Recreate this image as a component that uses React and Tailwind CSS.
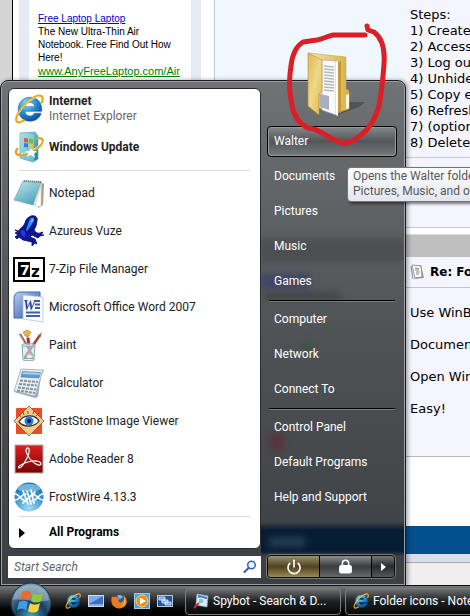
import React from 'react';
import { Lock, Power } from 'lucide-react';

const InternetExplorerIcon = ({ id, className }) => (
  <svg viewBox="0 0 32 32" className={className} aria-hidden="true">
    <defs>
      <radialGradient id={id} cx="0.35" cy="0.25" r="0.85">
        <stop offset="0" stopColor="#8fe0fa" />
        <stop offset="0.45" stopColor="#2a94dc" />
        <stop offset="1" stopColor="#0a3f8c" />
      </radialGradient>
    </defs>
    <path
      d="M17 3.5C9 3.5 4.5 9.5 4.5 16.5C4.5 24 10 29 17 29C23 29 27.5 25.5 29 20.5H21.5C20.5 22.5 19 23.5 17 23.5C14 23.5 12 21.5 11.8 18.5H29.6C30.4 9.5 25 3.5 17 3.5ZM12 13.5C12.5 10.5 14.5 9 17 9C20 9 21.8 10.8 22.2 13.5Z"
      fill={`url(#${id})`}
      stroke="#1763ab"
      strokeWidth="0.6"
    />
    <path
      d="M29.500 9C31.5 4.5 31 1.5 27 1.8C20 2.5 9 12 4.5 20.5C1.5 26.5 1.5 30.5 5.5 30.3C7.5 30.2 9 29.3 10.5 28.2"
      fill="none"
      stroke="#e9a91c"
      strokeWidth="2.4"
      strokeLinecap="round"
    />
    <path d="M27 2.5C20 3.5 9.5 12.5 5 21" fill="none" stroke="#ffe694" strokeWidth="0.9" />
  </svg>
);

const WindowsUpdateIcon = () => (
  <svg viewBox="0 0 32 32" className="size-8" aria-hidden="true">
    <defs>
      <linearGradient id="updateBox" x1="0" y1="0" x2="1" y2="1">
        <stop offset="0" stopColor="#c6eaf0" />
        <stop offset="0.5" stopColor="#58b3c4" />
        <stop offset="1" stopColor="#1d7f94" />
      </linearGradient>
    </defs>
    <path d="M7 2L22 1L25 5V28L20 31L7 27Z" fill="url(#updateBox)" stroke="#5a9dab" strokeWidth="0.7" />
    <path d="M7 2L21 4V31L7 27Z" fill="#9fd8e2" opacity="0.6" />
    <path d="M11 7L15 7.5V11.5L11 11Z" fill="#e4582b" />
    <path d="M16 7.7L20 8.3V12.2L16 11.7Z" fill="#7db832" />
    <path d="M11 12L15 12.5V16.5L11 16Z" fill="#3a7fd0" />
    <path d="M16 12.7L20 13.2V17L16 16.6Z" fill="#f3c52c" />
    <path d="M23 8C28 6 31 8 29 12C26 18 14 24 7 24C2 24 2 20 5 17" fill="none" stroke="#e5a22c" strokeWidth="2.4" />
    <path d="M29 10C27 16 15 22 8 23" fill="none" stroke="#fff0b8" strokeWidth="0.9" />
    <path d="M18 17L20 20L24 20L21 23L22 27L18 24L14 26L15 22L12 20H16Z" fill="#f4fdff" />
  </svg>
);

const NotepadIcon = () => (
  <svg viewBox="0 0 32 32" className="size-8" aria-hidden="true">
    <defs>
      <linearGradient id="notepadCover" x1="0" y1="0" x2="0.6" y2="1">
        <stop offset="0" stopColor="#c5e6ee" />
        <stop offset="1" stopColor="#4ca6b8" />
      </linearGradient>
    </defs>
    <path d="M26 4L31 7L30 28L25 31Z" fill="#a99c82" />
    <path d="M10 5L29 6L28 29L20 27Z" fill="#f1f1e9" stroke="#aaa99e" strokeWidth="0.6" />
    <path d="M28 8L22 29L28 30Z" fill="#fff" stroke="#b5b5ab" strokeWidth="0.5" />
    <path d="M10 4L28 5L20 28L1 23Z" fill="url(#notepadCover)" stroke="#75aab5" strokeWidth="0.7" />
    <path d="M11 4L28 5" stroke="#777" strokeWidth="2" strokeDasharray="1 1" />
  </svg>
);

const FrogIcon = () => (
  <svg viewBox="0 0 32 32" className="size-8" aria-hidden="true">
    <path
      d="M18 1C22 0 25 2 24 6L23 11L21 15C22 17 25 19 27 18L30 17L28 20L31 20L27 21L25 23L19 20L17 22L22 24L24 29L22 28L19 31L19 27L10 25L6 22L4 24L2 22L5 20L2 18L5 17L2 15L6 16L7 14C10 12 12 9 13 5C14 3 16 2 18 1Z"
      fill="#10149b"
      stroke="#080a50"
      strokeWidth="0.8"
    />
    <path d="M18 3C20 2 22 3 21 6C19 9 17 12 14 16L13 15C15 11 15 6 18 3Z" fill="#2b94e9" />
    <path d="M9 15C12 15 13 18 12 22C10 22 7 19 8 16Z" fill="#2b38dc" />
    <path d="M19 4L20 5L18 8Z" fill="#b3f1ff" />
    <circle cx="22" cy="5" r="1" fill="#020326" />
  </svg>
);

const SevenZipIcon = () => (
  <svg viewBox="0 0 32 32" className="size-8" aria-hidden="true">
    <rect x="1" y="5" width="30" height="23" fill="#fff" stroke="#000" strokeWidth="2" />
    <rect x="5" y="9" width="12" height="15" />
    <text x="7" y="22" fontSize="14" className="fill-white font-['DejaVu_Sans'] font-bold">7</text>
    <text x="18" y="24" fontSize="15" className="fill-black font-['DejaVu_Sans'] font-bold">z</text>
  </svg>
);

const WordIcon = () => (
  <svg viewBox="0 0 32 32" className="size-8" aria-hidden="true">
    <defs>
      <linearGradient id="wordTile" x1="0" y1="0" x2="1" y2="1">
        <stop offset="0" stopColor="#b9d0f1" />
        <stop offset="1" stopColor="#2950a2" />
      </linearGradient>
    </defs>
    <path d="M7 1H27V27H1V8C1 4 3 1 7 1Z" fill="url(#wordTile)" stroke="#4265a9" />
    <path d="M10 4L30 6L30 31L10 28Z" fill="#f8fbff" stroke="#a8bddd" strokeWidth="0.7" />
    <path d="M22 10H27M22 13.500H27M22 17H27M13 21.500H27M13 25H27" stroke="#3a5fae" strokeWidth="1.8" />
    <text x="10" y="19" fontSize="14" className="fill-[#24489c] font-['Liberation_Serif'] font-bold italic">W</text>
  </svg>
);

const PaintIcon = () => (
  <svg viewBox="0 0 32 32" className="size-8" aria-hidden="true">
    <path d="M14 4L17 26" stroke="#c79548" strokeWidth="2" />
    <path d="M10 3L14 1L18 3L16 7H12Z" fill="#e9b34b" stroke="#a2732c" strokeWidth="0.5" />
    <path d="M7 5L20 27" stroke="#7c6050" strokeWidth="2.2" />
    <path d="M7 6L13 17" stroke="#d1bca3" strokeWidth="1" />
    <path d="M15 9L16 19" stroke="#c72026" strokeWidth="3" />
    <path d="M27 6L12 28" stroke="#a63d3a" strokeWidth="2.5" />
    <path d="M29 3L25 7L27 9Z" fill="#9b662f" />
    <path d="M9 16H22L21 31C18 32 12 32 10 31Z" fill="#cfe6ec" fillOpacity="0.6" stroke="#7d9da7" strokeWidth="0.9" />
    <ellipse cx="15.5" cy="16" rx="6.5" ry="1.8" fill="#ecf8fa" fillOpacity="0.5" stroke="#81a5af" strokeWidth="0.7" />
    <path d="M11 27C14 30 18 30 21 27L20 30H11Z" fill="#74ad92" />
  </svg>
);

const CalculatorIcon = () => (
  <svg viewBox="0 0 32 32" className="size-8" aria-hidden="true">
    <path d="M8 2L31 3L28 9L25 30L22 31L1 25Z" fill="#9eabb5" />
    <path d="M8 2L30 3L22 29L1 24Z" fill="#e8edf2" stroke="#98a7b3" strokeWidth="0.7" />
    <path d="M9.5 4.5L27.5 5.5L26 11L8 10Z" fill="#5f9ccd" stroke="#446e93" strokeWidth="0.5" />
    <path d="M10 5L27 6L26.5 8L9.5 7Z" fill="#a9d1ed" />
    <path d="M7 13.5L25 15M6 17L24 18.5M5 20.5L23 22.5M4 23.5L22 26" stroke="#8293a1" strokeWidth="2" strokeDasharray="3 1" />
  </svg>
);

const FastStoneIcon = () => (
  <svg viewBox="0 0 32 32" className="size-8" aria-hidden="true">
    <rect x="3" y="3" width="26" height="26" rx="1" fill="#f34a25" />
    <path d="M16 1L31 16L16 31L1 16Z" fill="#f4c98b" stroke="#765639" strokeWidth="0.8" />
    <path d="M6 17C10 9 22 9 26 16C22 22 11 23 6 17Z" fill="#fff" stroke="#392a20" strokeWidth="1.3" />
    <circle cx="16" cy="16" r="4.5" fill="#217fe2" />
    <circle cx="16" cy="16" r="2" fill="#001243" />
    <path d="M8 12L6 9M11 10L10 7M15 9V6M20 9L21 6M23 11L26 8" stroke="#67472b" strokeWidth="0.9" />
  </svg>
);

const AdobeReaderIcon = () => (
  <svg viewBox="0 0 32 32" className="size-8" aria-hidden="true">
    <defs>
      <linearGradient id="readerTile" x1="0" y1="0" x2="0" y2="1">
        <stop offset="0" stopColor="#df2020" />
        <stop offset="1" stopColor="#740505" />
      </linearGradient>
    </defs>
    <rect x="2" y="2" width="28" height="28" fill="url(#readerTile)" stroke="#c8a5a5" />
    <path
      d="M14 5C17 4 17 9 14 15C11 21 8 25 6 25C4 24 8 21 15 19C21 17 28 18 28 21C27 24 20 20 17 16C14 12 12 7 14 5Z"
      fill="none"
      stroke="#fff"
      strokeWidth="1.2"
    />
  </svg>
);

const FrostWireIcon = () => (
  <svg viewBox="0 0 32 32" className="size-8" aria-hidden="true">
    <defs>
      <radialGradient id="frostBall" cx="0.5" cy="0.9" r="0.9">
        <stop offset="0" stopColor="#a2dcf7" />
        <stop offset="0.6" stopColor="#3b93cf" />
        <stop offset="1" stopColor="#1b68ae" />
      </radialGradient>
    </defs>
    <circle cx="16" cy="16" r="14.5" fill="url(#frostBall)" />
    <path d="M4 8C9 1 23 1 28 8C22 12 10 12 4 8Z" fill="#a6daf2" opacity="0.6" />
    <path
      d="M2 13C7 13 8 20 13 20M2 19C7 19 8 13 13 13M30 13C25 13 24 20 19 20M30 19C25 19 24 13 19 13M10 10L15 23M14 10L18 23M18 9L21 22M10 22L22 11"
      fill="none"
      stroke="#fff"
      strokeWidth="1.7"
      strokeLinecap="round"
    />
  </svg>
);

const FolderIcon = ({ className }) => (
  <svg viewBox="0 0 62 66" className={className} aria-hidden="true">
    <defs>
      <linearGradient id="folderFront" x1="0" y1="0" x2="1" y2="1">
        <stop offset="0" stopColor="#dcb955" />
        <stop offset="0.5" stopColor="#f0d888" />
        <stop offset="1" stopColor="#dcb450" />
      </linearGradient>
      <linearGradient id="folderBack" x1="0" y1="0" x2="1" y2="0">
        <stop offset="0" stopColor="#f6e7a7" />
        <stop offset="1" stopColor="#d6b04c" />
      </linearGradient>
    </defs>
    <path d="M44 50L60 50L54 55L32 63Z" fill="#33373a" opacity="0.5" />
    <path d="M3 1L41 5V37L44 39V57L31 61L14 56V8Z" fill="url(#folderBack)" stroke="#caa64a" strokeWidth="0.6" />
    <path d="M41 43L44 42V56L41 57Z" fill="#fff8d5" />
    <path d="M17 8L31 9V63L17 58Z" fill="#fafafa" stroke="#aaa" strokeWidth="0.6" />
    <path d="M19 14L29 15M19 17L29 18M19 20L29 21M19 23L29 24M19 26L29 27M19 29L29 30M19 32L29 33M19 35L29 36M19 38L29 39" stroke="#b4b9be" strokeWidth="1.5" />
    <path d="M15 42L24 44V58L15 55Z" fill="#a8aebb" />
    <path d="M31 9L33 10V64L31 63Z" fill="#fff" />
    <path d="M33 10L36 9V61L33 60Z" fill="#c59a36" />
    <path d="M3 1L17 8V39L14 42V63L3 54Z" fill="url(#folderFront)" stroke="#b98f36" strokeWidth="0.6" />
  </svg>
);

const WindowsOrb = () => (
  <svg viewBox="0 0 42 42" className="size-[42px]" aria-hidden="true">
    <defs>
      <radialGradient id="orbGlass" cx="0.5" cy="0.85" r="0.85">
        <stop offset="0" stopColor="#3ea9c5" />
        <stop offset="0.45" stopColor="#153d60" />
        <stop offset="1" stopColor="#7ba0b4" />
      </radialGradient>
    </defs>
    <circle cx="21" cy="21" r="20" fill="url(#orbGlass)" stroke="#1d3443" />
    <path d="M3 18C4 8 12 3 21 3C30 3 38 8 39 18C29 22 14 16 3 18Z" fill="#d4e4eb" opacity="0.4" />
    <path d="M12 10C15 8 18 8 21 10L19 18C16 16 13 16 10 18Z" fill="#ee6a2c" />
    <path d="M23 11C26 13 30 13 33 11L31 19C28 21 24 21 21 19Z" fill="#91c83e" />
    <path d="M9 20C12 18 15 18 18 20L16 28C13 26 10 26 7 28Z" fill="#3c9ee6" />
    <path d="M20 21C23 23 27 23 30 21L28 29C25 31 21 31 18 29Z" fill="#fbd13d" />
  </svg>
);

const ShowDesktopIcon = () => (
  <svg viewBox="0 0 16 16" className="size-4" aria-hidden="true">
    <rect x="0.5" y="2.5" width="15" height="11" fill="#3a6fc4" stroke="#d3dcea" />
    <path d="M1 3H15L1 11Z" fill="#7facea" />
    <path d="M1 12H15" stroke="#dbe7f5" />
  </svg>
);

const FirefoxIcon = () => (
  <svg viewBox="0 0 16 16" className="size-4" aria-hidden="true">
    <circle cx="8.5" cy="7.5" r="6" fill="#2c57a5" />
    <path d="M6 3C8 1 11 2 12 4L9 6Z" fill="#7eb9e8" />
    <path d="M1 2C1 4 2 4 3 4C5 3 7 5 9 6C7 7 7 8 8 9C10 10 12 9 13 7C13 5 13 3 12 2C17 5 17 12 12 14.5C7 17 1 14 0.5 9C0 6 1 4 1 2Z" fill="#ea7b1c" />
    <path d="M13 4C16 8 14 13 9 14C13 12 14 9 13 4Z" fill="#ffd24e" />
  </svg>
);

const MediaPlayerIcon = () => (
  <svg viewBox="0 0 16 16" className="size-4" aria-hidden="true">
    <rect x="0.5" y="0.5" width="15" height="15" fill="#4b9fd7" stroke="#98d1ee" />
    <circle cx="8" cy="8" r="6" fill="#f08b1d" stroke="#ffd17d" />
    <path d="M6 4.5L12 8L6 11.5Z" fill="#fff" />
  </svg>
);

const SwitchWindowsIcon = () => (
  <svg viewBox="0 0 16 16" className="size-4" aria-hidden="true">
    <rect x="0.5" y="2.5" width="15" height="11" fill="#23539b" stroke="#b9c8dc" />
    <path d="M2 4H8V7H2ZM5 7H11V10H5ZM8 9H14V12H8Z" fill="#7ea7dc" stroke="#e8f2fd" strokeWidth="0.8" />
  </svg>
);

const SpybotIcon = () => (
  <svg viewBox="0 0 16 16" className="size-4 shrink-0" aria-hidden="true">
    <path d="M4 1L15 3L14 14L3 12Z" fill="#d8e8f5" stroke="#8eb0cd" strokeWidth="0.7" />
    <path d="M5 2L14 4L13.8 6L5 4.5Z" fill="#4379c5" />
    <circle cx="8" cy="8" r="3" fill="#8abbe0" stroke="#eef6fc" />
    <path d="M6 10L1 15" stroke="#c53031" strokeWidth="2" />
  </svg>
);

const PostIcon = () => (
  <svg viewBox="0 0 16 16" className="size-4 shrink-0" aria-hidden="true">
    <path d="M3 2L11 1L14 14L5 15Z" fill="#999" />
    <path d="M2 1L11 2L12 13L5 14Z" fill="#fff" stroke="#777" strokeWidth="0.7" />
    <path d="M5 4L9 4.5M5 6H9M6 8H10M6 10H9M1 2L3 15" stroke="#777" strokeWidth="0.9" />
  </svg>
);

const programs = [
  { name: 'Notepad', Icon: NotepadIcon },
  { name: 'Azureus Vuze', Icon: FrogIcon },
  { name: '7-Zip File Manager', Icon: SevenZipIcon },
  { name: 'Microsoft Office Word 2007', Icon: WordIcon },
  { name: 'Paint', Icon: PaintIcon },
  { name: 'Calculator', Icon: CalculatorIcon },
  { name: 'FastStone Image Viewer', Icon: FastStoneIcon },
  { name: 'Adobe Reader 8', Icon: AdobeReaderIcon },
  { name: 'FrostWire 4.13.3', Icon: FrostWireIcon },
];

const places = [
  ['Documents', 'Pictures', 'Music', 'Games'],
  ['Computer', 'Network', 'Connect To'],
  ['Control Panel', 'Default Programs', 'Help and Support'],
];

const steps = ['Create', 'Access', 'Log out', 'Unhide', 'Copy e', 'Refresh', '(option', 'Delete'];

const ForumPage = () => (
  <div className="flex min-h-0 flex-1 overflow-hidden bg-white">
    <div className="w-3 shrink-0 bg-[#d4d4d4]" />
    <div className="w-px shrink-0 bg-black" />

    {/* Ad column */}
    <div className="ml-[6px] w-[182px] shrink-0 border-x-[10px] border-[#e4ebf3] pl-[9px] pt-3 font-['Liberation_Sans',Arial,sans-serif] text-[10px] leading-[13px] text-black">
      <a href="#ad" className="block text-[#0000cc] underline">Free Laptop Laptop</a>
      <p className="whitespace-nowrap">
        The New Ultra-Thin Air<br />Notebook. Free Find Out How<br />Here!
      </p>
      <a href="#ad" className="block whitespace-nowrap text-[11px] leading-[14px] text-[#008000] underline">www.AnyFreeLaptop.com/Air</a>
    </div>

    <div className="ml-[13px] w-[188px] shrink-0 border-l border-[#c4c9ce] bg-[#f0f8ff]" />

    {/* Thread column */}
    <div className="flex min-w-0 flex-1 flex-col overflow-hidden whitespace-nowrap font-['DejaVu_Sans',Verdana,sans-serif] text-[13px] leading-4 text-black">
      <div className="h-[158px] shrink-0 border-b border-[#c6c6d0] bg-[#f5f5ff] pl-2 pt-[7px]">
        <p>Steps:</p>
        <ol>
          {steps.map((step, idx) => (
            <li key={step}>{idx + 1}) {step}</li>
          ))}
        </ol>
      </div>
      <div className="h-[70px] shrink-0 border-b border-[#c6c6c6] bg-[#f5f5ff]" />
      <div className="mt-1.5 h-[23px] shrink-0 border-t border-[#ddd] bg-[#bfbfbf]" />
      <div className="flex h-[31px] shrink-0 items-center gap-1 border-b border-[#c6c6d0] bg-[#f5f5ff] pl-2">
        <PostIcon />
        <h2 className="text-xs font-bold">Re: Folder icons</h2>
      </div>
      <div className="flex shrink-0 flex-col gap-4 border-b border-[#b9b9b9] bg-[#f5f5ff] pb-[39px] pl-2 pt-[17px]">
        <p>Use WinBubbles</p>
        <p>Documents</p>
        <p>Open WinBubbles</p>
        <p>Easy!</p>
      </div>
      <div className="mt-[69px] h-7 shrink-0 bg-[#04508f]" />
      <div className="h-2 shrink-0 bg-[#dcdcea]" />
      <div className="flex-1 border-t border-[#aaa] bg-[#f0eeee]" />
    </div>
  </div>
);

// Page shapes that shine through the glass of the menu
const GlassShapes = () => (
  <div className="pointer-events-none absolute inset-y-0 right-0 w-[144px] overflow-hidden" aria-hidden="true">
    <div className="absolute left-0 top-[156px] h-6 w-full bg-black/15 blur-[3px]" />
    <div className="absolute left-0 top-[192px] h-3.5 w-[50px] bg-[#2c3070]/50 blur-[3px]" />
    <div className="absolute left-1 top-[210px] h-2 w-[76px] bg-black/20 blur-[3px]" />
    <div className="absolute left-[43px] top-[260px] size-2 rounded-full bg-[#125c2a]/60 blur-[3px]" />
    <div className="absolute left-[10px] top-[352px] h-4 w-3.5 bg-[#6a1f2c]/50 blur-[3px]" />
    <div className="absolute left-[9px] top-[455px] h-2.5 w-9 bg-[#31485e]/70 blur-[3px]" />
  </div>
);

const ProgramButton = ({ children, icon }) => (
  <button type="button" className="flex h-[38px] w-full items-center gap-1 pl-1 text-left text-[#222]">
    <span className="flex w-8 shrink-0 justify-center">{icon}</span>
    <span>{children}</span>
  </button>
);

const StartMenu = () => (
  <div className="absolute bottom-[30px] left-0 flex w-[406px] rounded-t-lg border border-[#1c1c1c] bg-linear-to-b from-[#707375] via-[#505356] to-[#3b3e42] font-[Roboto,'Open_Sans',sans-serif] text-xs leading-[15px] shadow-[inset_0_0_0_1px_#9b9da0,2px_0_4px_rgba(0,0,0,0.35)]">
    {/* Programs */}
    <div className="flex flex-1 flex-col gap-[7px] pb-[7px] pl-[7px] pt-[7px]">
      <nav className="rounded-md border border-[#2b2b2b] bg-white pt-px" aria-label="Programs">
        <ProgramButton icon={<InternetExplorerIcon id="ieMenu" className="size-[30px]" />}>
          <span className="block font-bold">Internet</span>
          <span className="block text-[#666]">Internet Explorer</span>
        </ProgramButton>
        <ProgramButton icon={<WindowsUpdateIcon />}>
          <span className="font-bold">Windows Update</span>
        </ProgramButton>
        <hr className="mx-2.5 mb-[3px] mt-1 border-[#d6dde2]" />
        {programs.map(({ name, Icon }) => (
          <ProgramButton key={name} icon={<Icon />}>{name}</ProgramButton>
        ))}
        <hr className="mx-2.5 border-[#d6dde2]" />
        <button type="button" className="flex h-[31px] w-full items-center gap-6 pl-2.5 text-left font-bold text-black">
          <svg viewBox="0 0 6 10" className="h-2.5 w-1.5" aria-hidden="true">
            <path d="M0 0L6 5L0 10Z" />
          </svg>
          All Programs
        </button>
      </nav>
      <label className="flex h-[22px] items-center bg-white pl-1.5 pr-1">
        <input
          type="text"
          placeholder="Start Search"
          aria-label="Start Search"
          className="min-w-0 flex-1 bg-transparent italic outline-none placeholder:text-[#666]"
        />
        <svg viewBox="0 0 14 14" className="size-3.5" aria-hidden="true">
          <circle cx="8.5" cy="5" r="3.8" fill="#e9f4ff" stroke="#3466b0" strokeWidth="1.5" />
          <path d="M5.500 8L1.5 12" stroke="#3466b0" strokeWidth="2.2" strokeLinecap="round" />
        </svg>
      </label>
    </div>

    {/* Places */}
    <div className="relative m-px ml-0 flex w-[143px] shrink-0 flex-col bg-[linear-gradient(to_top,transparent_28px,#071d33_33px,#071d33_54px,transparent_62px)] pb-[6px] pl-[6px] pr-[7px] pt-[42px] text-white">
      <GlassShapes />
      <button type="button" className="relative my-0.5 h-[31px] rounded-sm border border-black bg-linear-to-b from-[#85888a] via-[#54575a] to-[#77797c] px-1.5 text-left shadow-[inset_0_0_0_1px_#96989a]">
        Walter
      </button>
      {places.map((group, idx) => (
        <div key={group[0]} className="relative">
          {idx > 0 && <hr className="mx-0.5 mt-px border-b border-t-black border-b-[#777b7e]" />}
          {group.map((place) => (
            <button key={place} type="button" className="block h-[35px] w-full px-[7px] text-left">{place}</button>
          ))}
        </div>
      ))}
      <div className="relative mt-auto flex h-[23px] w-[128px] overflow-hidden rounded-sm border border-[#0b0b0b] shadow-[0_0_0_1px_#777]">
        <button type="button" aria-label="Power" className="flex flex-1 items-center justify-center border-r border-black bg-linear-to-b from-[#9d9070] via-[#50431f] to-[#9c8955]">
          <Power size={16} strokeWidth={2.5} />
        </button>
        <button type="button" aria-label="Lock" className="flex flex-1 items-center justify-center border-r border-black bg-linear-to-b from-[#8c8e90] via-[#3a3c3f] to-[#66696c]">
          <Lock size={15} strokeWidth={2.5} className="[&_rect]:fill-white" />
        </button>
        <button type="button" aria-label="More" className="flex w-[22px] items-center justify-center bg-linear-to-b from-[#76787a] via-[#292b2e] to-[#55585b]">
          <svg viewBox="0 0 5 8" className="h-2 w-[5px]" aria-hidden="true">
            <path d="M0 0L5 4L0 8Z" fill="#fff" />
          </svg>
        </button>
      </div>
    </div>

    <FolderIcon className="absolute left-[304px] top-[-29px] h-[66px] w-[62px]" />
    <div role="tooltip" className="absolute left-[346px] top-[86px] h-[35px] whitespace-nowrap rounded-sm border border-[#767676] bg-linear-to-b from-white to-[#e4e5f0] px-[5px] pt-px text-[#575757] shadow-[2px_2px_3px_rgba(0,0,0,0.5)]">
      Opens the Walter folder, Documents,<br />Pictures, Music, and other files
    </div>
  </div>
);

const Taskbar = () => (
  <div className="relative flex h-[31px] shrink-0 items-center border-t border-[#111] bg-linear-to-b from-[#77797b] via-[#242628] via-50% to-black pl-[10px] font-[Roboto,'Open_Sans',sans-serif] text-xs text-white">
    <button type="button" aria-label="Start" className="z-10 -mb-1 shrink-0">
      <WindowsOrb />
    </button>
    <div className="ml-[13px] flex shrink-0 items-center gap-[7px]">
      <button type="button" aria-label="Internet Explorer"><InternetExplorerIcon id="ieQuick" className="size-4" /></button>
      <button type="button" aria-label="Show desktop"><ShowDesktopIcon /></button>
      <button type="button" aria-label="Firefox"><FirefoxIcon /></button>
      <button type="button" aria-label="Media Player"><MediaPlayerIcon /></button>
      <button type="button" aria-label="Switch windows"><SwitchWindowsIcon /></button>
    </div>
    <div className="ml-3 flex min-w-0 flex-1 gap-1 overflow-hidden">
      <button type="button" className="flex h-[27px] w-[156px] shrink-0 items-center gap-1 rounded-sm border border-[#7b7d7f] bg-linear-to-b from-[#717375] via-[#1d1f21] via-50% to-[#090909] px-[7px]">
        <SpybotIcon />
        <span className="truncate">Spybot - Search &amp; D...</span>
      </button>
      <button type="button" className="flex h-[27px] w-[156px] shrink-0 items-center gap-1 rounded-sm border border-[#7b7d7f] bg-linear-to-b from-[#717375] via-[#1d1f21] via-50% to-[#090909] px-[7px]">
        <InternetExplorerIcon id="ieTask" className="size-4 shrink-0" />
        <span className="whitespace-nowrap">Folder icons - Notepad</span>
      </button>
    </div>
  </div>
);

// Freehand pen stroke around the folder
const PenCircle = () => (
  <svg viewBox="0 0 100 124" className="pointer-events-none absolute left-[287px] top-[22px] h-[124px] w-[100px]" aria-hidden="true">
    <path
      d="M78 13L46 13C38 15 36 17 30 18L16 20C8 25 5 34 4 44C2 56 2 70 5 83C7 94 12 102 21 106C33 107 38 114 48 118C57 123 63 121 70 116C81 109 88 98 92 84C95 68 96 56 97 42C98 28 95 16 87 10L81 8L80 4"
      fill="none"
      stroke="#dc1f26"
      strokeWidth="5"
      strokeLinecap="round"
      strokeLinejoin="round"
    />
  </svg>
);

const App = () => (
  <div className="relative flex h-screen flex-col overflow-hidden">
    <ForumPage />
    <StartMenu />
    <Taskbar />
    <PenCircle />
  </div>
);

export default App;
